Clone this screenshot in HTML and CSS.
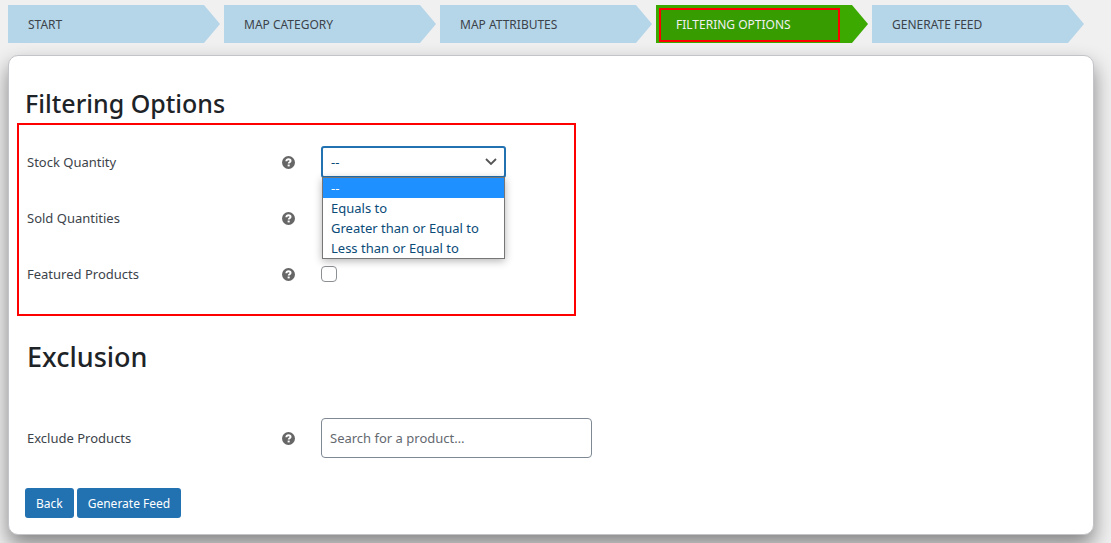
FILE: index.html
```html
<!DOCTYPE html>
<html lang="en">
<head>
    <meta charset="UTF-8">
    <meta name="viewport" content="width=device-width, initial-scale=1.0">
    <title>Filtering Options</title>
    <link rel="stylesheet" href="styles.css">
</head>
<body>
    <!-- help icon, reused in every row -->
    <svg class="sprite" aria-hidden="true">
        <symbol id="help" viewBox="0 0 12 12">
            <circle cx="6" cy="6" r="6" fill="#666"/>
            <path d="M4 4.9C4 3.5 4.8 3 6 3s1.9.6 1.9 1.6c0 1.2-1.7 1.2-1.7 2.4" fill="none" stroke="#fff" stroke-width="1.8"/>
            <rect x="5.2" y="7.9" width="1.9" height="1.7" fill="#fff"/>
        </symbol>
    </svg>

    <nav class="steps">
        <a class="step" href="#start">START</a>
        <a class="step" href="#category">MAP CATEGORY</a>
        <a class="step" href="#attributes">MAP ATTRIBUTES</a>
        <a class="step step-active" href="#filtering">FILTERING OPTIONS</a>
        <a class="step" href="#generate">GENERATE FEED</a>
    </nav>

    <main class="card">
        <form>
            <h2 class="title">Filtering Options</h2>

            <section class="highlight">
                <div class="row">
                    <label for="stock">Stock Quantity</label>
                    <svg class="help"><use href="#help"/></svg>
                    <div class="dropdown">
                        <select id="stock">
                            <option>--</option>
                            <option>Equals to</option>
                            <option>Greater than or Equal to</option>
                            <option>Less than or Equal to</option>
                        </select>
                        <svg class="chevron" viewBox="0 0 12 8"><path d="M1 1l5 5 5-5" fill="none" stroke="#555" stroke-width="1.8"/></svg>
                        <ul class="menu">
                            <li class="selected">--</li>
                            <li>Equals to</li>
                            <li>Greater than or Equal to</li>
                            <li>Less than or Equal to</li>
                        </ul>
                    </div>
                </div>
                <div class="row">
                    <span>Sold Quantities</span>
                    <svg class="help"><use href="#help"/></svg>
                </div>
                <div class="row">
                    <label for="featured">Featured Products</label>
                    <svg class="help"><use href="#help"/></svg>
                    <input type="checkbox" id="featured">
                </div>
            </section>

            <h2 class="title title-large">Exclusion</h2>

            <div class="row row-exclude">
                <label for="exclude">Exclude Products</label>
                <svg class="help"><use href="#help"/></svg>
                <input type="text" id="exclude" placeholder="Search for a product…">
            </div>

            <div class="actions">
                <button type="button">Back</button>
                <button type="submit">Generate Feed</button>
            </div>
        </form>
    </main>
</body>
</html>
```

FILE: styles.css
```css
* {
    margin: 0;
    padding: 0;
    box-sizing: border-box;
}

body {
    font-family: "Segoe UI", "Noto Sans", "Open Sans", sans-serif;
    font-size: 13px;
    color: #3c434a;
    background: #f0f0f1;
    padding: 5px 17px 8px 8px;
}

.sprite {
    display: none;
}

.steps {
    display: grid;
    grid-template-columns: repeat(5, 1fr);
    gap: 4px;
    margin: 0 10px 12px 0;
}

.step {
    position: relative;
    height: 38px;
    line-height: 40px;
    padding-left: 20px;
    background: #b5d6e9;
    color: #3c434a;
    font-size: 12px;
    text-decoration: none;
    white-space: nowrap;
    clip-path: polygon(0 0, calc(100% - 16px) 0, 100% 50%, calc(100% - 16px) 100%, 0 100%);
}

.step-active {
    z-index: 0;
    background: #3ba900;
    color: #f0f0f1;
}

.step-active::before {
    content: "";
    position: absolute;
    inset: 3px 28px 1px 3px;
    z-index: -1;
    border: 2px solid #f00;
    background: #369c00;
}

.card {
    background: #fff;
    border: 1px solid #c3c4c7;
    border-radius: 10px;
    padding: 31px 8px 16px;
    box-shadow: 0 10px 20px rgba(0, 0, 0, 0.45);
}

.title {
    padding-left: 8px;
    font-size: 25px;
    line-height: 32px;
    font-weight: 500;
    color: #1d2327;
}

.title-large {
    margin-top: 23px;
    padding-left: 10px;
    font-size: 27px;
    line-height: 36px;
}

.highlight {
    width: 559px;
    max-width: 100%;
    margin-top: 4px;
    padding: 9px 8px 12px;
    border: 2px solid #f00;
}

.row {
    display: grid;
    grid-template-columns: 255px 39px 1fr;
    align-items: center;
    height: 56px;
}

.row-exclude {
    margin-top: 35px;
    padding-left: 10px;
}

.help {
    width: 13px;
    height: 13px;
}

.dropdown {
    position: relative;
    width: 185px;
}

select {
    display: block;
    width: 100%;
    height: 32px;
    padding: 0 24px 0 8px;
    appearance: none;
    border: 2px solid #2271b1;
    border-radius: 3px;
    background: #fff;
    color: #0a4b78;
    font: inherit;
}

.chevron {
    position: absolute;
    top: 12px;
    right: 9px;
    width: 12px;
    height: 8px;
}

.menu {
    position: absolute;
    top: 31px;
    left: 1px;
    right: 1px;
    border: 1px solid #767676;
    background: #fff;
    color: #0a4b78;
    list-style: none;
    box-shadow: 0 2px 8px rgba(0, 0, 0, 0.3);
}

.menu li {
    height: 20px;
    line-height: 20px;
    padding-left: 8px;
}

.menu .selected {
    background: #1e90ff;
    color: #fff;
}

input[type="checkbox"] {
    width: 16px;
    height: 16px;
    appearance: none;
    border: 1px solid #8c8f94;
    border-radius: 4px;
    background: #fff;
}

input[type="text"] {
    width: 271px;
    height: 40px;
    padding: 0 8px;
    border: 1px solid #7e8993;
    border-radius: 4px;
    font: inherit;
}

input::placeholder {
    color: #646970;
}

.actions {
    display: flex;
    gap: 3px;
    margin-top: 22px;
    padding-left: 8px;
}

button {
    height: 30px;
    padding: 0 11px;
    border: none;
    border-radius: 3px;
    background: #2271b1;
    color: #fff;
    font-family: inherit;
    font-size: 12px;
    cursor: pointer;
}
```
